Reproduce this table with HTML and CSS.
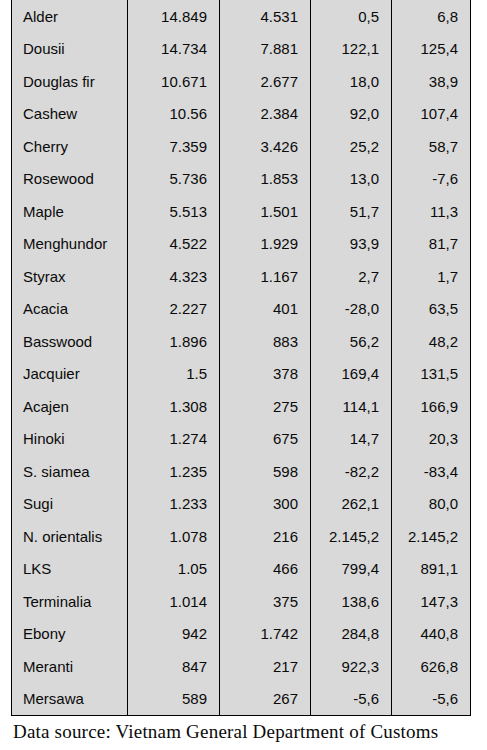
FILE: index.html
```html
<!DOCTYPE html>
<html>
<head>
<meta charset="utf-8">
<link rel="stylesheet" href="styles.css">
</head>
<body>
<table class="data">
<colgroup>
<col class="c1"><col class="c2"><col class="c3"><col class="c4"><col class="c5">
</colgroup>
<tbody>
<tr><td>Alder</td><td>14.849</td><td>4.531</td><td>0,5</td><td>6,8</td></tr>
<tr><td>Dousii</td><td>14.734</td><td>7.881</td><td>122,1</td><td>125,4</td></tr>
<tr><td>Douglas fir</td><td>10.671</td><td>2.677</td><td>18,0</td><td>38,9</td></tr>
<tr><td>Cashew</td><td>10.56</td><td>2.384</td><td>92,0</td><td>107,4</td></tr>
<tr><td>Cherry</td><td>7.359</td><td>3.426</td><td>25,2</td><td>58,7</td></tr>
<tr><td>Rosewood</td><td>5.736</td><td>1.853</td><td>13,0</td><td>-7,6</td></tr>
<tr><td>Maple</td><td>5.513</td><td>1.501</td><td>51,7</td><td>11,3</td></tr>
<tr><td>Menghundor</td><td>4.522</td><td>1.929</td><td>93,9</td><td>81,7</td></tr>
<tr><td>Styrax</td><td>4.323</td><td>1.167</td><td>2,7</td><td>1,7</td></tr>
<tr><td>Acacia</td><td>2.227</td><td>401</td><td>-28,0</td><td>63,5</td></tr>
<tr><td>Basswood</td><td>1.896</td><td>883</td><td>56,2</td><td>48,2</td></tr>
<tr><td>Jacquier</td><td>1.5</td><td>378</td><td>169,4</td><td>131,5</td></tr>
<tr><td>Acajen</td><td>1.308</td><td>275</td><td>114,1</td><td>166,9</td></tr>
<tr><td>Hinoki</td><td>1.274</td><td>675</td><td>14,7</td><td>20,3</td></tr>
<tr><td>S. siamea</td><td>1.235</td><td>598</td><td>-82,2</td><td>-83,4</td></tr>
<tr><td>Sugi</td><td>1.233</td><td>300</td><td>262,1</td><td>80,0</td></tr>
<tr><td>N. orientalis</td><td>1.078</td><td>216</td><td>2.145,2</td><td>2.145,2</td></tr>
<tr><td>LKS</td><td>1.05</td><td>466</td><td>799,4</td><td>891,1</td></tr>
<tr><td>Terminalia</td><td>1.014</td><td>375</td><td>138,6</td><td>147,3</td></tr>
<tr><td>Ebony</td><td>942</td><td>1.742</td><td>284,8</td><td>440,8</td></tr>
<tr><td>Meranti</td><td>847</td><td>217</td><td>922,3</td><td>626,8</td></tr>
<tr><td>Mersawa</td><td>589</td><td>267</td><td>-5,6</td><td>-5,6</td></tr>
</tbody>
</table>
<p class="source">Data source: Vietnam General Department of Customs</p>
</body>
</html>
```

FILE: styles.css
```css
html, body {
  margin: 0;
  padding: 0;
  background: #ffffff;
}

.data {
  margin-left: 11px;
  width: 459px;
  border-collapse: collapse;
  table-layout: fixed;
  background: #d9d9d9;
  font-family: "Liberation Sans", Arial, sans-serif;
  font-size: 15px;
  color: #0a0a0a;
  border-left: 1px solid #000;
  border-right: 1px solid #000;
  border-bottom: 1px solid #000;
}

.c1 { width: 116px; }
.c2 { width: 92px; }
.c3 { width: 91px; }
.c4 { width: 81px; }
.c5 { width: 79px; }

.data tr {
  height: 32.5px;
}

.data td {
  padding: 0 12px 0 12px;
  border-left: 1px solid #000;
  border-right: 1px solid #000;
  text-align: right;
  vertical-align: middle;
  white-space: nowrap;
}

.data td:first-child {
  text-align: left;
  padding-left: 11px;
}

.source {
  margin: 5px 0 0 13px;
  font-family: "Liberation Serif", "Times New Roman", serif;
  font-size: 19px;
  letter-spacing: 0.2px;
  line-height: 22px;
  color: #0a0a0a;
}
```
